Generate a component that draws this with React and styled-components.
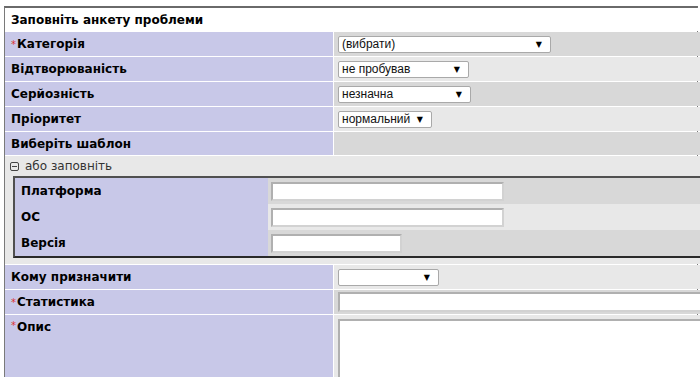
import React from "react";
import styled, { createGlobalStyle } from "styled-components";

const Global = createGlobalStyle`
  html, body { margin: 0; padding: 0; background: #fff; overflow: hidden; }
  body { font-family: "DejaVu Sans", Verdana, sans-serif; font-size: 12px; color: #000; }
`;

const Form = styled.div`
  width: 692px;
  margin: 6px 0 0 4px;
  border-top: 2px solid #6a6a6a;
  border-left: 1px solid #7a7a7a;
  border-right: 1px solid #7a7a7a;
  display: grid;
  grid-template-columns: 328px 1fr;
  gap: 1px;
  background: #fff;
`;

const Header = styled.div`
  grid-column: 1 / -1;
  height: 23px;
  display: flex;
  align-items: center;
  padding-left: 6px;
  font-weight: bold;
  background: #fff;
`;

const Label = styled.div`
  background: #c8c8e8;
  height: ${(p) => p.$h || 24}px;
  display: flex;
  align-items: ${(p) => (p.$top ? "flex-start" : "center")};
  padding: ${(p) => (p.$top ? "5px 0 0 6px" : "0 0 0 6px")};
  font-weight: bold;
  box-sizing: border-box;
`;

const Req = styled.span`
  color: #d33;
  font-weight: normal;
  font-size: 10px;
  margin-right: 1px;
`;

const Value = styled.div`
  background: ${(p) => (p.$light ? "#e8e8e8" : "#d8d8d8")};
  height: ${(p) => p.$h || 24}px;
  display: flex;
  align-items: ${(p) => (p.$top ? "flex-start" : "center")};
  padding: ${(p) => (p.$top ? "4px 0 0 4px" : "0 0 0 4px")};
  box-sizing: border-box;
  overflow: visible;
`;

const SelectWrap = styled.div`
  position: relative;
  width: ${(p) => p.$w}px;
  height: 17px;
  box-sizing: border-box;
  background: #fff;
  border: 1px solid #a9a9a9;
  border-radius: 2px;
`;

const NativeSelect = styled.select`
  appearance: none;
  -webkit-appearance: none;
  border: none;
  background: transparent;
  width: 100%;
  height: 100%;
  padding: 0 0 0 3px;
  margin: 0;
  font-family: "Liberation Sans", Arial, sans-serif;
  font-size: 12px;
  color: #111;
  outline: none;
`;

const Arrow = styled.span`
  position: absolute;
  right: 8px;
  top: 2px;
  font-size: 8px;
  line-height: 11px;
  pointer-events: none;
  color: #000;
`;

const FullRow = styled.div`
  grid-column: 1 / -1;
  background: #e8e8e8;
  padding: 0 0 6px 0;
`;

const Toggle = styled.div`
  height: 20px;
  display: flex;
  align-items: center;
  gap: 6px;
  color: #333;
  padding-left: 5px;
  font-size: 12px;
`;

const SubBox = styled.div`
  margin-left: 8px;
  border: 2px solid #505050;
  border-bottom-color: #2a2a2a;
  display: grid;
  grid-template-columns: 253px 1fr;
`;

const SubLabel = styled.div`
  background: #c8c8e8;
  height: 26px;
  display: flex;
  align-items: center;
  padding-left: 6px;
  font-weight: bold;
  box-sizing: border-box;
`;

const SubValue = styled.div`
  background: ${(p) => (p.$light ? "#e8e8e8" : "#d8d8d8")};
  height: 26px;
  display: flex;
  align-items: center;
  padding-left: 3px;
  box-sizing: border-box;
`;

const TextInput = styled.input`
  width: ${(p) => p.$w}px;
  height: ${(p) => p.$h || 19}px;
  box-sizing: border-box;
  border: 2px solid;
  border-color: #b0b0b0 #d2d2d2 #d2d2d2 #b0b0b0;
  background: #fff;
  margin: 0;
  padding: 0 3px;
  font-family: "Liberation Sans", Arial, sans-serif;
  font-size: 12px;
  flex-shrink: 0;
`;

const TextArea = styled.textarea`
  width: 366px;
  height: 70px;
  box-sizing: border-box;
  border: 2px solid;
  border-color: #b0b0b0 #d2d2d2 #d2d2d2 #b0b0b0;
  background: #fff;
  margin: 0;
  resize: none;
  flex-shrink: 0;
`;

function MinusBox() {
  return (
    <svg width="9" height="9" viewBox="0 0 9 9">
      <rect x="0.5" y="0.5" width="8" height="8" rx="1.5" fill="none" stroke="#444" />
      <line x1="2" y1="4.5" x2="7" y2="4.5" stroke="#444" />
    </svg>
  );
}

function Select({ w, value }) {
  return (
    <SelectWrap $w={w}>
      <NativeSelect defaultValue={value}>
        <option value={value}>{value}</option>
      </NativeSelect>
      <Arrow>▼</Arrow>
    </SelectWrap>
  );
}

export default function App() {
  return (
    <>
      <Global />
      <Form>
        <Header>Заповніть анкету проблеми</Header>

        <Label><Req>*</Req>Категорія</Label>
        <Value><Select w={213} value="(вибрати)" /></Value>

        <Label>Відтворюваність</Label>
        <Value $light><Select w={131} value="не пробував" /></Value>

        <Label>Серйозність</Label>
        <Value><Select w={133} value="незначна" /></Value>

        <Label>Пріоритет</Label>
        <Value $light><Select w={94} value="нормальний" /></Value>

        <Label $h={23}>Виберіть шаблон</Label>
        <Value $h={23} />

        <FullRow>
          <Toggle><MinusBox /><span>або заповніть</span></Toggle>
          <SubBox>
            <SubLabel>Платформа</SubLabel>
            <SubValue><TextInput $w={233} /></SubValue>
            <SubLabel>ОС</SubLabel>
            <SubValue $light><TextInput $w={233} /></SubValue>
            <SubLabel>Версія</SubLabel>
            <SubValue><TextInput $w={131} /></SubValue>
          </SubBox>
        </FullRow>

        <Label>Кому призначити</Label>
        <Value $light><Select w={101} value="" /></Value>

        <Label><Req>*</Req>Статистика</Label>
        <Value><TextInput $w={366} $h={20} /></Value>

        <Label $h={62} $top><Req>*</Req>Опис</Label>
        <Value $h={62} $light $top><TextArea /></Value>
      </Form>
    </>
  );
}
